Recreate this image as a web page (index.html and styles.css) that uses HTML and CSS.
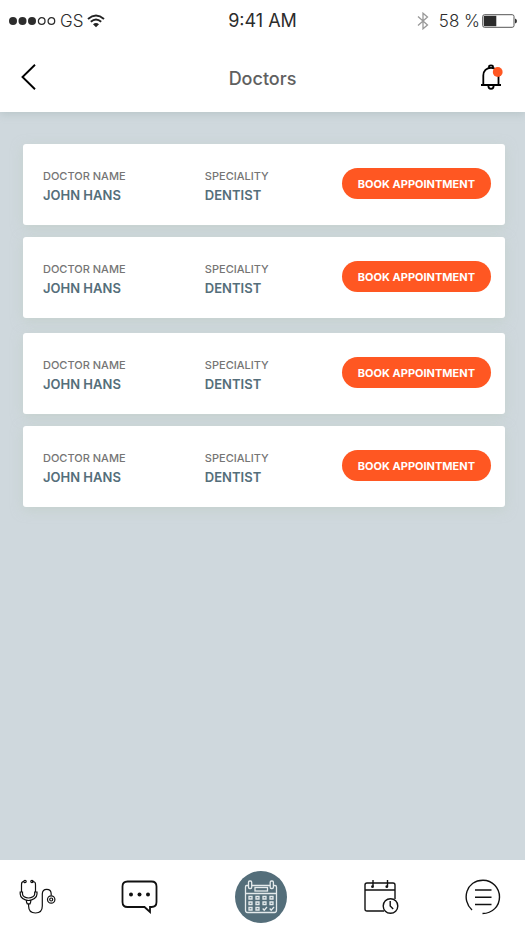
FILE: index.html
```html
<!DOCTYPE html>
<html lang="en">
<head>
<meta charset="utf-8">
<meta name="viewport" content="width=device-width, initial-scale=1">
<title>Doctors</title>
<link rel="stylesheet" href="styles.css">
</head>
<body>
<header class="header">
  <div class="status">
    <div class="status-side">
      <svg width="48" height="10" viewBox="0 0 48 10" fill="#2c2c2c" aria-hidden="true">
        <circle cx="5" cy="5" r="4"/><circle cx="14.500" cy="5" r="4"/><circle cx="24" cy="5" r="4"/>
        <g fill="none" stroke="#2c2c2c" stroke-width="1.300"><circle cx="33.700" cy="5" r="3.300"/><circle cx="43.400" cy="5" r="3.300"/></g>
      </svg>
      <span class="status-text">GS</span>
      <svg width="18" height="14" viewBox="0 0 18 14" fill="none" stroke="#222" stroke-width="1.900" aria-hidden="true">
        <path d="M1 5Q9-1.800 17 5M3.800 7.800Q9 3.300 14.200 7.800"/><path d="M6 10.200Q9 7.600 12 10.200L9 13.200Z" fill="#222" stroke="none"/>
      </svg>
    </div>
    <time class="clock">9:41 AM</time>
    <div class="status-side status-end">
      <svg class="bluetooth" width="12" height="18" viewBox="0 0 12 18" fill="none" stroke="#999" stroke-width="1.300" aria-hidden="true"><path d="M1 4.500L10.500 13L6 16.800V1.200L10.500 5L1 13.500"/></svg>
      <span class="status-text">58 %</span>
      <svg width="35" height="14" viewBox="0 0 35 14" aria-hidden="true"><rect x=".7" y=".7" width="31.300" height="12.600" rx="1.800" fill="#fff" stroke="#555"/><rect x="1.800" y="1.800" width="12.500" height="10.400" fill="#2b2b2b"/><path d="M33 4.500Q35 5 35 7T33 9.500Z" fill="#333"/></svg>
    </div>
  </div>
  <div class="titlebar">
    <button class="icon-button" type="button" aria-label="Back">
      <svg width="16" height="28" viewBox="0 0 16 28" fill="none" stroke="#000" stroke-width="1.900"><path d="M14 1.800L1.500 14L14 26.200"/></svg>
    </button>
    <h1 class="title">Doctors</h1>
    <button class="icon-button icon-end" type="button" aria-label="Notifications">
      <svg width="24" height="28" viewBox="0 0 24 28" fill="none" stroke="#000" stroke-width="1.800"><path d="M1 22H21M3.300 22V12.500C3.300 8 6.500 4.800 11 4.800S18.500 8 18.500 12.500V22M9 5V3.700Q9 2.400 11 2.400T13 3.700V5M8.300 22.500C8.300 27 13.700 27 13.700 22.500"/><circle cx="17.700" cy="9" r="4.900" fill="#ff5722" stroke="none"/></svg>
    </button>
  </div>
</header>
<main class="content">
  <div class="group">
    <article class="card">
      <dl class="field"><dt>DOCTOR NAME</dt><dd>JOHN HANS</dd></dl>
      <dl class="field"><dt>SPECIALITY</dt><dd>DENTIST</dd></dl>
      <button class="book" type="button">BOOK APPOINTMENT</button>
    </article>
    <article class="card">
      <dl class="field"><dt>DOCTOR NAME</dt><dd>JOHN HANS</dd></dl>
      <dl class="field"><dt>SPECIALITY</dt><dd>DENTIST</dd></dl>
      <button class="book" type="button">BOOK APPOINTMENT</button>
    </article>
  </div>
  <div class="group">
    <article class="card">
      <dl class="field"><dt>DOCTOR NAME</dt><dd>JOHN HANS</dd></dl>
      <dl class="field"><dt>SPECIALITY</dt><dd>DENTIST</dd></dl>
      <button class="book" type="button">BOOK APPOINTMENT</button>
    </article>
    <article class="card">
      <dl class="field"><dt>DOCTOR NAME</dt><dd>JOHN HANS</dd></dl>
      <dl class="field"><dt>SPECIALITY</dt><dd>DENTIST</dd></dl>
      <button class="book" type="button">BOOK APPOINTMENT</button>
    </article>
  </div>
</main>
<nav class="nav" aria-label="Main">
  <div class="nav-side">
    <a href="#doctors" aria-label="Doctors">
      <svg width="38" height="36" viewBox="0 0 38 36" fill="none" stroke="#111" stroke-width="1.200">
        <path d="M5 2.500C2.500 2.500 2.500 4 2.500 6V13M13 2.500C16.500 2.500 16.500 4 16.500 6V13"/>
        <circle cx="6" cy="2.500" r="1.200"/><circle cx="13" cy="2.500" r="1.200"/>
        <path d="M1.200 13V15C1.200 18.500 5 21.500 9.500 21.500S18 18.500 18 15V13H15.700V15C15.700 17 13 19 9.500 19S3.500 17 3.500 15V13Z"/>
        <path d="M7.500 21.500H11.700V23L11 24.800H8.300L7.500 23ZM9.600 25V27C9.600 31 12 34 16.500 34S23.300 31 23.300 27V15C23.300 12 25 10.300 27.700 10.300S32.200 12 32.200 15V16.500"/>
        <circle cx="32.200" cy="20.500" r="3.700"/><circle cx="32.200" cy="20.500" r="1.500"/>
      </svg>
    </a>
    <a href="#messages" aria-label="Messages">
      <svg width="38" height="34" viewBox="0 0 38 34" fill="none" stroke="#111" stroke-width="1.800"><path d="M7.500 1.500H31.500Q36.500 1.500 36.500 6.500V22Q36.500 27 31.500 27H30V32L24.500 27H7.500Q2.500 27 2.500 22V6.500Q2.500 1.500 7.500 1.500Z"/><g fill="#111" stroke="none"><circle cx="11" cy="14.500" r="2"/><circle cx="19.500" cy="14.500" r="2"/><circle cx="28" cy="14.500" r="2"/></g></svg>
    </a>
  </div>
  <a href="#appointments" aria-label="Appointments" aria-current="page">
    <svg width="52" height="52" viewBox="0 0 52 52" fill="none" stroke="#e4eaec" stroke-width="1.300">
      <circle cx="26" cy="26" r="26" fill="#546e7a" stroke="none"/>
      <path d="M13 14.500H11.500Q10.500 14.500 10.500 16V39Q10.500 41.500 12.500 41.500H39.500Q41.500 41.500 41.500 39V16Q41.500 14.500 40 14.500H38.500M17 14.500H35M10.500 22.500H41.500"/>
      <rect x="13.500" y="10" width="3.200" height="7.500" rx="1.200"/><rect x="35.200" y="10" width="3.200" height="7.500" rx="1.200"/><rect x="20" y="16.500" width="12.500" height="3.500"/>
      <path d="M14 25.500h3v2.500h-3zM21 25.500h3v2.500h-3zM28 25.500h3v2.500h-3zM35 25.500h3v2.500h-3zM14 31h3v2.500h-3zM21 31h3v2.500h-3zM28 31h3v2.500h-3zM35 31h3v2.500h-3zM14 36.500h3v2.500h-3zM21 36.500h3v2.500h-3zM27.700 37.500L29.200 39.200L32 36M34.700 37.500L36.200 39.200L39 36"/>
    </svg>
  </a>
  <div class="nav-side">
    <a href="#schedule" aria-label="Schedule">
      <svg width="38" height="36" viewBox="0 0 38 36" fill="none" stroke="#111" stroke-width="1.400"><path d="M20 32H3Q1 32 1 30V6Q1 4 3 4H29Q31 4 31 6V20M1 11H31M9 1V7.500M23.500 1V7.500"/><g fill="#111" stroke="none"><circle cx="8.500" cy="7.700" r="1.400"/><circle cx="22.800" cy="7.700" r="1.400"/></g><circle cx="26.500" cy="27" r="7.300" fill="#fff"/><path d="M26.200 22V27L29.200 30"/></svg>
    </a>
    <a href="#menu" aria-label="Menu">
      <svg width="36" height="36" viewBox="0 0 36 36" fill="none" stroke="#111" stroke-width="1.400"><path d="M7 31C-4 21 1 1.200 18 1.200C27.500 1.200 34.500 9 34.500 18C34.500 27 27.500 34.500 17.500 34.500M10 11H26.500M10 18.200H26.500M10 25.500H26.500"/></svg>
    </a>
  </div>
</nav>
</body>
</html>
```
FILE: styles.css
```css
* { box-sizing: border-box; }

body {
  margin: 0;
  min-height: 100vh;
  display: flex;
  flex-direction: column;
  background: #cfd8dd;
  font-family: Inter, "Liberation Sans", sans-serif;
}

button { border: 0; padding: 0; background: none; font-family: inherit; cursor: pointer; }
svg { display: block; }

.header {
  background: #fff;
  box-shadow: 0 2px 8px rgba(150, 170, 170, 0.4);
}

.status,
.titlebar {
  display: grid;
  grid-template-columns: 1fr auto 1fr;
  align-items: center;
}

.status { height: 42px; padding: 0 8px; color: #2c2c2c; }
.status-side { display: flex; align-items: center; gap: 4px; }
.status-end { justify-content: flex-end; gap: 2px; }
.status-text { font-size: 17px; line-height: 20px; font-weight: 300; }
.bluetooth { margin-right: 8px; }
.clock { font-size: 18px; line-height: 20px; font-weight: 400; }

.titlebar { height: 70px; padding: 0 21px; }
.icon-button { justify-self: start; }
.icon-end { justify-self: end; }
.title { margin: 0; padding-top: 4px; font-size: 18px; line-height: 24px; font-weight: 500; color: #606060; }

.content {
  flex: 1;
  display: flex;
  flex-direction: column;
  gap: 15px;
  padding: 32px 20px 32px 23px;
}

.group { display: grid; gap: 12px; }

.card {
  display: grid;
  grid-template-columns: 13fr 11fr auto;
  align-items: start;
  padding: 24px 14px 19px 20px;
  border-radius: 3px;
  background: #fff;
  box-shadow: 0 3px 12px rgba(190, 205, 195, 0.6);
}

.field { margin: 0; }
.field dt { font-size: 11px; line-height: 16px; font-weight: 500; color: #757575; }
.field dd { margin: 0; font-size: 13px; line-height: 22px; font-weight: 600; color: #546e7a; }

.book {
  padding: 1px 16px 0;
  border-radius: 16px;
  background: #ff5722;
  color: #fff;
  font-size: 11px;
  line-height: 30px;
  font-weight: 700;
}

.nav {
  display: flex;
  align-items: center;
  justify-content: space-between;
  height: 74px;
  padding: 0 24px 0 19px;
  background: #fff;
}

.nav-side { display: flex; align-items: center; gap: 12vw; }
```
